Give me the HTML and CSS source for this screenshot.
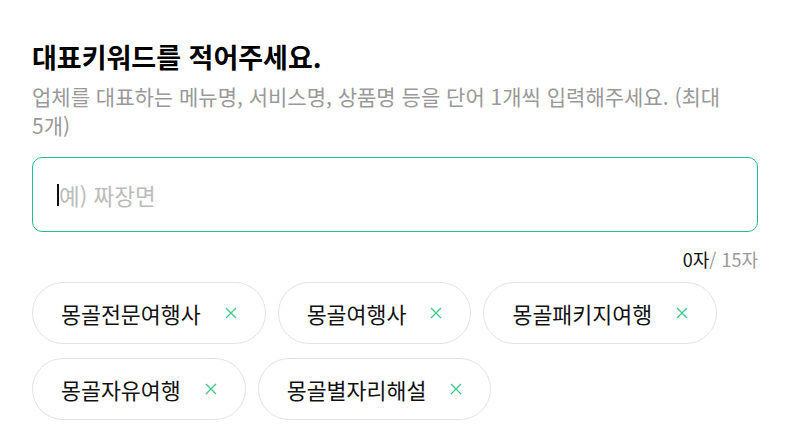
FILE: index.html
```html
<!DOCTYPE html>
<html lang="ko">
<head>
<meta charset="utf-8">
<link rel="stylesheet" href="styles.css">
</head>
<body>
<div class="wrap">
  <h1 class="title">대표키워드를 적어주세요.</h1>
  <p class="desc">업체를 대표하는 메뉴명, 서비스명, 상품명 등을 단어 1개씩 입력해주세요. (최대 5개)</p>
  <div class="field">
    <span class="caret"></span><span class="placeholder">예) 짜장면</span>
  </div>
  <div class="counter"><span class="cur">0자</span>/ 15자</div>
  <div class="chips">
    <div class="chip"><span>몽골전문여행사</span><svg class="x" viewBox="0 0 12 12"><path d="M1 1L11 11M11 1L1 11"/></svg></div>
    <div class="chip"><span>몽골여행사</span><svg class="x" viewBox="0 0 12 12"><path d="M1 1L11 11M11 1L1 11"/></svg></div>
    <div class="chip"><span>몽골패키지여행</span><svg class="x" viewBox="0 0 12 12"><path d="M1 1L11 11M11 1L1 11"/></svg></div>
    <div class="chip"><span>몽골자유여행</span><svg class="x" viewBox="0 0 12 12"><path d="M1 1L11 11M11 1L1 11"/></svg></div>
    <div class="chip"><span>몽골별자리해설</span><svg class="x" viewBox="0 0 12 12"><path d="M1 1L11 11M11 1L1 11"/></svg></div>
  </div>
</div>
</body>
</html>
```
FILE: styles.css
```css
* { box-sizing: border-box; }
html, body { margin: 0; padding: 0; background: #fff; }
body { font-family: "Noto Sans CJK KR", "Noto Sans", sans-serif; color: #111; }
.wrap { width: 726px; margin-left: 32px; padding-top: 40px; }
.title { margin: 0; font-size: 27px; font-weight: 700; line-height: 34px; color: #000; }
.desc { margin: 8px 0 0; font-size: 21px; line-height: 29px; color: #999; word-break: keep-all; }
.field { margin-top: 17px; height: 75px; border: 1px solid #20c18a; border-radius: 10px; display: flex; align-items: center; padding-left: 24px; }
.caret { width: 2px; height: 22px; background: #111; }
.placeholder { font-size: 22.5px; color: #bbb; }
.counter { margin-top: 14px; text-align: right; font-size: 18px; line-height: 26px; color: #999; }
.counter .cur { color: #111; }
.chips { margin-top: 10px; display: flex; flex-wrap: wrap; gap: 14px 12px; }
.chip { height: 62px; border: 1px solid #e3e3e3; border-radius: 31px; display: flex; align-items: center; padding: 0 28px; font-size: 21.7px; gap: 24px; }
.x { width: 12px; height: 12px; stroke: #3cc98a; stroke-width: 1.3; fill: none; }
```
